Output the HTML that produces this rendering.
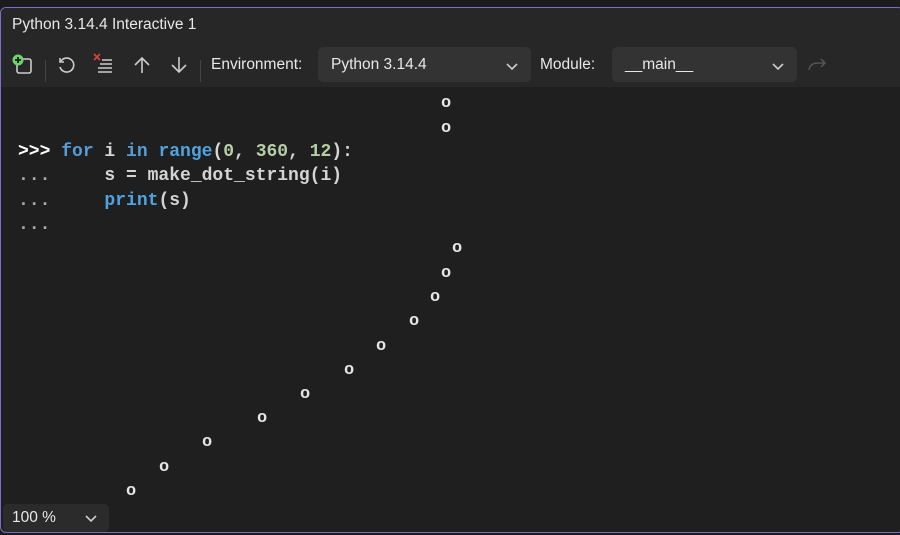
<!DOCTYPE html>
<html><head><style>
*{margin:0;padding:0;box-sizing:border-box}
body{width:900px;height:535px;background:#1b1b1b;overflow:hidden;position:relative;font-family:"Liberation Sans",sans-serif}
#win{position:absolute;left:0;top:7px;width:904px;height:526px;border:1.5px solid #7b6fc9;border-radius:6px;background:#1f1f1f;overflow:hidden}
#head{position:absolute;left:0;top:0;width:100%;height:79px;background:#272727}
.t{position:absolute;color:#e8e8e8;font-size:15.5px;white-space:pre}
.dd{position:absolute;top:39px;height:35px;background:#333;border-radius:5px}
.code{position:absolute;font-family:"Liberation Mono",monospace;font-size:18px;font-weight:bold;color:#d4d4d4;white-space:pre;line-height:24.4px}
.o{position:absolute;font-family:"Liberation Mono",monospace;font-size:17px;font-weight:bold;color:#e4e4e4}
.sep{position:absolute;top:52px;width:1px;height:22px;background:#444}
</style></head><body>
<div id="win">
<div id="head">
<div class="t" style="left:11px;top:8px">Python 3.14.4 Interactive 1</div>
<svg style="position:absolute;left:10px;top:46px" width="24" height="24" viewBox="0 0 24 24">
<rect x="6" y="5" width="14" height="14" rx="2" fill="none" stroke="#ccc" stroke-width="1.6"/>
<circle cx="7" cy="6" r="5.5" fill="#6fd36c"/>
<path d="M7 3v6M4 6h6" stroke="#1f1f1f" stroke-width="1.8"/></svg>
<div class="sep" style="left:44px"></div>
<svg style="position:absolute;left:55px;top:47px" width="22" height="22" viewBox="0 0 22 22"><path d="M5 6A7 7 0 1 1 4 12" fill="none" stroke="#ccc" stroke-width="1.6"/><path d="M4 3v4h4" fill="none" stroke="#ccc" stroke-width="1.6"/></svg>
<svg style="position:absolute;left:91px;top:44px" width="24" height="24" viewBox="0 0 24 24"><path d="M2 2l6 6M8 2l-6 6" stroke="#e0403a" stroke-width="1.6"/><path d="M10 8h10M8 12h12M6 16h14M6 20h14" stroke="#ccc" stroke-width="1.5"/></svg>
<svg style="position:absolute;left:130px;top:46px" width="22" height="22" viewBox="0 0 22 22"><path d="M11 19V4M4 11l7-7 7 7" fill="none" stroke="#ccc" stroke-width="1.6"/></svg>
<svg style="position:absolute;left:167px;top:46px" width="22" height="22" viewBox="0 0 22 22"><path d="M11 3v15M4 11l7 7 7-7" fill="none" stroke="#ccc" stroke-width="1.6"/></svg>
<div class="sep" style="left:199px"></div>
<div class="t" style="left:210px;top:48px">Environment:</div>
<div class="dd" style="left:317px;width:213px"></div>
<div class="t" style="left:330px;top:48px">Python 3.14.4</div>
<svg style="position:absolute;left:504px;top:54px" width="14" height="10"><path d="M2 2l5 5 5-5" fill="none" stroke="#ccc" stroke-width="1.6"/></svg>
<div class="t" style="left:539px;top:48px">Module:</div>
<div class="dd" style="left:611px;width:185px"></div>
<div class="t" style="left:624px;top:48px">__main__</div>
<svg style="position:absolute;left:770px;top:54px" width="14" height="10"><path d="M2 2l5 5 5-5" fill="none" stroke="#ccc" stroke-width="1.6"/></svg>
<svg style="position:absolute;left:805px;top:47px" width="22" height="20"><path d="M3 15q1-7 9-7h7M15 4l4 4-4 4" fill="none" stroke="#555" stroke-width="1.5"/></svg>
</div>
</div>
<div class="code" style="left:18px;top:140px"><span style="color:#fff">&gt;&gt;&gt;</span> <span style="color:#569cd6">for</span> i <span style="color:#569cd6">in</span> <span style="color:#4fa3e0">range</span>(<span style="color:#b5cea8">0</span>, <span style="color:#b5cea8">360</span>, <span style="color:#b5cea8">12</span>):
<span style="color:#aaa">...</span>     s = make_dot_string(i)
<span style="color:#aaa">...</span>     <span style="color:#4fa3e0">print</span>(s)
<span style="color:#aaa">...</span></div>
<div class="o" style="left:441px;top:94px">o</div>
<div class="o" style="left:441px;top:119px">o</div>
<div class="o" style="left:452px;top:239px">o</div>
<div class="o" style="left:441px;top:264px">o</div>
<div class="o" style="left:430px;top:288px">o</div>
<div class="o" style="left:409px;top:312px">o</div>
<div class="o" style="left:376px;top:337px">o</div>
<div class="o" style="left:344px;top:361px">o</div>
<div class="o" style="left:300px;top:385px">o</div>
<div class="o" style="left:257px;top:409px">o</div>
<div class="o" style="left:202px;top:433px">o</div>
<div class="o" style="left:159px;top:458px">o</div>
<div class="o" style="left:126px;top:482px">o</div>
<div style="position:absolute;left:3px;top:504px;width:106px;height:28px;background:#2b2b2b;border-radius:5px"></div>
<div class="t" style="left:12px;top:509px">100 %</div>
<svg style="position:absolute;left:84px;top:514px" width="14" height="10"><path d="M2 2l5 5 5-5" fill="none" stroke="#ccc" stroke-width="1.6"/></svg>
</body></html>
